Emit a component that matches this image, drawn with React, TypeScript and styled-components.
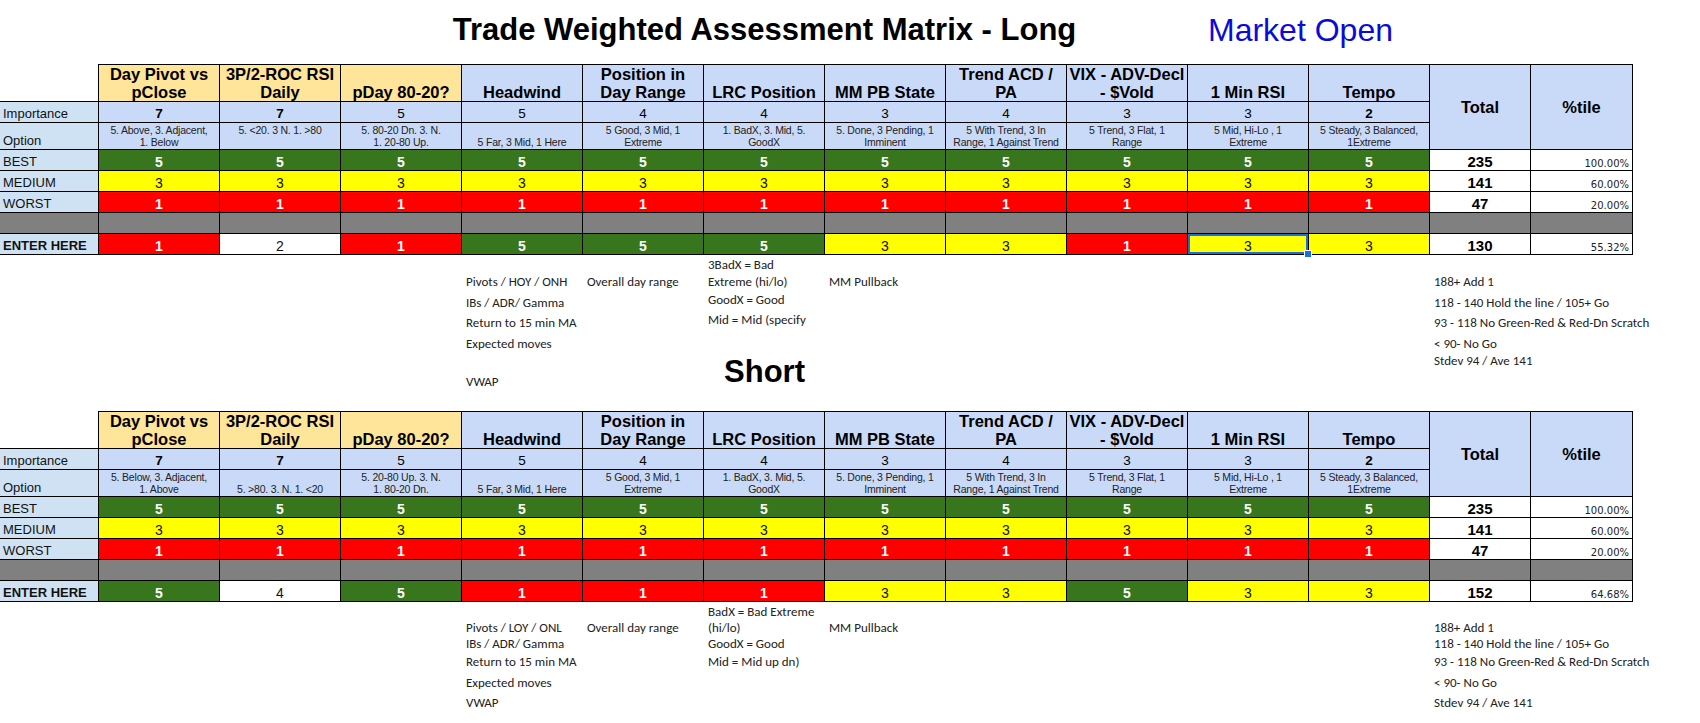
import React from 'react';
import styled, { createGlobalStyle } from 'styled-components';

const GREEN = '#38761d';
const YELLOW = '#ffff00';
const RED = '#ff0000';
const GRAY = '#808080';
const HEAD_BLUE = '#c9daf8';
const LABEL_BLUE = '#cfe2f3';
const ORANGE = '#ffe599';

const COLUMNS = '99px repeat(11, 121px) 101px 102px';

const GlobalStyle = createGlobalStyle`
  html, body {
    margin: 0;
    padding: 0;
    background: #fff;
  }
  body {
    font-family: "Liberation Sans", Arial, sans-serif;
    color: #000;
  }
`;

const Page = styled.div`
  width: 1700px;
  height: 723px;
  overflow: hidden;
  background: #fff;
`;

const TitleRow = styled.div`
  display: grid;
  grid-template-columns: ${COLUMNS};
  height: 64px;
  box-sizing: border-box;
  padding-top: 12px;
  align-items: start;
`;

const Title = styled.h1`
  grid-column: 7;
  justify-self: center;
  margin: 0;
  font-size: 31px;
  font-weight: 700;
  white-space: nowrap;
`;

const MarketStatus = styled.div`
  grid-column: 11 / span 2;
  justify-self: start;
  padding-left: 20px;
  font-size: 32px;
  color: #0b0bd8;
  white-space: nowrap;
`;

const Sheet = styled.div`
  display: grid;
  grid-template-columns: ${COLUMNS};
  grid-template-rows: 38px 21px 27px 21px 21px 21px 21px 21px;
`;

const Cell = styled.div<{ $bg?: string }>`
  box-sizing: border-box;
  position: relative;
  display: flex;
  align-items: flex-end;
  justify-content: center;
  text-align: center;
  border-right: 1px solid #000;
  border-bottom: 1px solid #000;
  background: ${({ $bg }) => $bg || '#fff'};
  white-space: pre-line;
  padding: 0 2px;
`;

const Corner = styled.div`
  border-right: 1px solid #000;
  border-bottom: 1px solid #000;
`;

const HeaderCell = styled(Cell)`
  border-top: 1px solid #000;
  font-size: 16.5px;
  font-weight: 700;
  line-height: 18px;
  padding: 0 1px;
`;

const SummaryHead = styled(HeaderCell)`
  grid-row: span 3;
  align-items: center;
  background: ${HEAD_BLUE};
`;

const LabelCell = styled(Cell)<{ $bold?: boolean }>`
  justify-content: flex-start;
  background: ${({ $bg }) => $bg || LABEL_BLUE};
  font-size: 13px;
  line-height: 16px;
  font-weight: ${({ $bold }) => ($bold ? 700 : 400)};
  padding-left: 3px;
  color: #111;
`;

const ImportanceCell = styled(Cell)<{ $bold?: boolean }>`
  background: ${HEAD_BLUE};
  font-size: 13.5px;
  line-height: 16px;
  font-weight: ${({ $bold }) => ($bold ? 700 : 400)};
`;

const OptionCell = styled(Cell)`
  background: ${HEAD_BLUE};
  font-size: 10.5px;
  line-height: 12px;
  padding-bottom: 1px;
  color: #222;
  letter-spacing: -0.2px;
`;

const ScoreCell = styled(Cell)<{ $light?: boolean; $selected?: boolean }>`
  font-size: 14px;
  line-height: 16px;
  font-weight: ${({ $light }) => ($light ? 700 : 400)};
  color: ${({ $light }) => ($light ? '#fff' : '#111')};
  ${({ $selected }) =>
    $selected &&
    `
    box-shadow: inset 0 0 0 2px #1c6fd6;
    &::after {
      content: '';
      position: absolute;
      right: -4px;
      bottom: -4px;
      width: 6px;
      height: 6px;
      background: #1c6fd6;
      border: 1px solid #fff;
      z-index: 2;
    }
  `}
`;

const TotalCell = styled(Cell)`
  font-size: 15px;
  line-height: 17px;
  font-weight: 700;
`;

const PctCell = styled(Cell)`
  justify-content: flex-end;
  padding-right: 3px;
  font-family: "DejaVu Sans", Verdana, sans-serif;
  font-size: 10px;
  line-height: 13px;
  color: #222;
`;

const Notes = styled.div<{ $rows: string; $gap: number }>`
  display: grid;
  grid-template-columns: ${COLUMNS};
  grid-template-rows: ${({ $rows }) => $rows};
  margin-bottom: ${({ $gap }) => $gap}px;
  font-family: Carlito, Lato, "Open Sans", sans-serif;
  font-size: 13px;
  color: #222;
`;

const Note = styled.div<{ $col: number; $row: number; $mid?: boolean }>`
  grid-column: ${({ $col }) => $col};
  grid-row: ${({ $row }) => $row};
  align-self: ${({ $mid }) => ($mid ? 'center' : 'end')};
  padding-left: 4px;
  line-height: 14px;
  white-space: nowrap;
`;

const SectionTitle = styled.div`
  grid-column: 7;
  grid-row: 6 / span 2;
  justify-self: center;
  align-self: end;
  font-family: "Liberation Sans", Arial, sans-serif;
  font-size: 31px;
  line-height: 34px;
  font-weight: 700;
  color: #000;
  white-space: nowrap;
`;

type Score = { v: number; sel?: boolean };

interface MatrixData {
  headers: { text: string; warm?: boolean }[];
  importance: number[];
  options: string[];
  entered: Score[];
  total: number;
  pct: string;
}

const headersBase = [
  { text: 'Day Pivot vs\npClose', warm: true },
  { text: '3P/2-ROC RSI\nDaily', warm: true },
  { text: 'pDay 80-20?', warm: true },
  { text: 'Headwind' },
  { text: 'Position in\nDay Range' },
  { text: 'LRC Position' },
  { text: 'MM PB State' },
  { text: 'Trend ACD /\nPA' },
  { text: 'VIX - ADV-Decl\n- $Vold' },
  { text: '1 Min RSI' },
  { text: 'Tempo' },
];

const importance = [7, 7, 5, 5, 4, 4, 3, 4, 3, 3, 2];
const boldImportance = [true, true, false, false, false, false, false, false, false, false, true];

const sharedOptions = [
  '5 Far, 3  Mid, 1 Here',
  '5 Good, 3 Mid, 1\nExtreme',
  '1. BadX, 3. Mid, 5.\nGoodX',
  '5. Done, 3 Pending, 1\nImminent',
  '5 With Trend, 3  In\nRange, 1 Against Trend',
  '5 Trend, 3 Flat, 1\nRange',
  '5 Mid, Hi-Lo , 1\nExtreme',
  '5 Steady, 3 Balanced,\n1Extreme',
];

const longMatrix: MatrixData = {
  headers: headersBase,
  importance,
  options: [
    '5. Above, 3. Adjacent,\n1. Below',
    '5. <20. 3 N. 1. >80\n\u00a0',
    '5. 80-20 Dn. 3. N.\n1. 20-80 Up.',
    ...sharedOptions,
  ],
  entered: [1, 2, 1, 5, 5, 5, 3, 3, 1, 3, 3].map((v, i) => ({ v, sel: i === 9 })),
  total: 130,
  pct: '55.32%',
};

const shortMatrix: MatrixData = {
  headers: headersBase,
  importance,
  options: [
    '5. Below, 3. Adjacent,\n1. Above',
    '5. >80. 3. N. 1. <20',
    '5. 20-80 Up. 3. N.\n1. 80-20 Dn.',
    ...sharedOptions,
  ],
  entered: [5, 4, 5, 1, 1, 1, 3, 3, 5, 3, 3].map((v) => ({ v })),
  total: 152,
  pct: '64.68%',
};

const scoreColor = (v: number) => {
  if (v === 5) return GREEN;
  if (v === 3) return YELLOW;
  if (v === 1) return RED;
  return '#fff';
};

const fixedRows = [
  { label: 'BEST', v: 5, total: 235, pct: '100.00%' },
  { label: 'MEDIUM', v: 3, total: 141, pct: '60.00%' },
  { label: 'WORST', v: 1, total: 47, pct: '20.00%' },
];

const Matrix: React.FC<{ data: MatrixData }> = ({ data }) => (
  <Sheet>
    {/* header row */}
    <Corner />
    {data.headers.map((h) => (
      <HeaderCell key={h.text} $bg={h.warm ? ORANGE : HEAD_BLUE}>
        {h.text}
      </HeaderCell>
    ))}
    <SummaryHead>Total</SummaryHead>
    <SummaryHead>%tile</SummaryHead>

    {/* importance + option */}
    <LabelCell>Importance</LabelCell>
    {data.importance.map((n, i) => (
      <ImportanceCell key={i} $bold={boldImportance[i]}>
        {n}
      </ImportanceCell>
    ))}
    <LabelCell>Option</LabelCell>
    {data.options.map((o, i) => (
      <OptionCell key={i}>{o}</OptionCell>
    ))}

    {/* best / medium / worst */}
    {fixedRows.map((r) => (
      <React.Fragment key={r.label}>
        <LabelCell>{r.label}</LabelCell>
        {data.headers.map((_, i) => (
          <ScoreCell key={i} $bg={scoreColor(r.v)} $light={r.v !== 3}>
            {r.v}
          </ScoreCell>
        ))}
        <TotalCell>{r.total}</TotalCell>
        <PctCell>{r.pct}</PctCell>
      </React.Fragment>
    ))}

    {/* spacer */}
    {Array.from({ length: 14 }).map((_, i) => (
      <Cell key={i} $bg={GRAY} />
    ))}

    {/* entered values */}
    <LabelCell $bold>ENTER HERE</LabelCell>
    {data.entered.map((s, i) => (
      <ScoreCell
        key={i}
        $bg={scoreColor(s.v)}
        $light={s.v === 5 || s.v === 1}
        $selected={s.sel}
      >
        {s.v}
      </ScoreCell>
    ))}
    <TotalCell>{data.total}</TotalCell>
    <PctCell>{data.pct}</PctCell>
  </Sheet>
);

type NoteItem = { col: number; row: number; text: string; mid?: boolean };

const scoringNotes = (start: number): NoteItem[] => [
  { col: 13, row: start, text: '188+ Add 1' },
  { col: 13, row: start + 1, text: '118 - 140 Hold the line / 105+ Go' },
  { col: 13, row: start + 2, text: '93 - 118 No Green-Red & Red-Dn Scratch' },
  { col: 13, row: start + 3, text: '< 90- No Go' },
  { col: 13, row: start + 4, text: 'Stdev 94 / Ave 141' },
];

const longNotes: NoteItem[] = [
  { col: 7, row: 1, text: '3BadX = Bad' },
  { col: 5, row: 2, text: 'Pivots / HOY / ONH' },
  { col: 6, row: 2, text: 'Overall day range' },
  { col: 7, row: 2, text: 'Extreme (hi/lo)' },
  { col: 8, row: 2, text: 'MM Pullback' },
  { col: 5, row: 3, text: 'IBs / ADR/ Gamma' },
  { col: 7, row: 3, text: 'GoodX = Good', mid: true },
  { col: 5, row: 4, text: 'Return to 15 min MA' },
  { col: 7, row: 4, text: 'Mid = Mid (specify', mid: true },
  { col: 5, row: 5, text: 'Expected moves' },
  { col: 5, row: 7, text: 'VWAP' },
  ...scoringNotes(2),
];

const shortNotes: NoteItem[] = [
  { col: 7, row: 1, text: 'BadX = Bad Extreme' },
  { col: 5, row: 2, text: 'Pivots / LOY / ONL' },
  { col: 6, row: 2, text: 'Overall day range' },
  { col: 7, row: 2, text: '(hi/lo)' },
  { col: 8, row: 2, text: 'MM Pullback' },
  { col: 5, row: 3, text: 'IBs / ADR/ Gamma' },
  { col: 7, row: 3, text: 'GoodX = Good' },
  { col: 5, row: 4, text: 'Return to 15 min MA' },
  { col: 7, row: 4, text: 'Mid = Mid up dn)' },
  { col: 5, row: 5, text: 'Expected moves' },
  { col: 5, row: 6, text: 'VWAP' },
  ...scoringNotes(2),
];

export default function App() {
  return (
    <Page>
      <GlobalStyle />
      <TitleRow>
        <Title>Trade Weighted Assessment Matrix - Long</Title>
        <MarketStatus>Market Open</MarketStatus>
      </TitleRow>

      <Matrix data={longMatrix} />
      <Notes $rows="17px 17px 21px 20px 21px 17px 21px" $gap={22}>
        {longNotes.map((n) => (
          <Note key={n.text} $col={n.col} $row={n.row} $mid={n.mid}>
            {n.text}
          </Note>
        ))}
        <SectionTitle>Short</SectionTitle>
      </Notes>

      <Matrix data={shortMatrix} />
      <Notes $rows="17px 16px 16px 18px 21px 20px" $gap={0}>
        {shortNotes.map((n) => (
          <Note key={n.text} $col={n.col} $row={n.row}>
            {n.text}
          </Note>
        ))}
      </Notes>
    </Page>
  );
}
